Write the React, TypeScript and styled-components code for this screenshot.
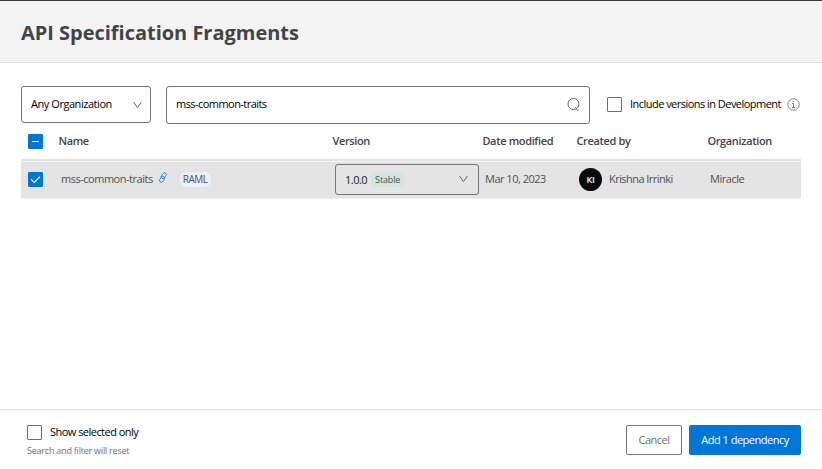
import React from "react";
import styled, { createGlobalStyle } from "styled-components";

const GlobalStyle = createGlobalStyle`
  *, *::before, *::after { box-sizing: border-box; }
  body { margin: 0; background: #fff; }
`;

const Dialog = styled.main`
  display: flex;
  flex-direction: column;
  width: 822px;
  height: 469px;
  overflow: hidden;
  background: #fff;
  color: #1a1a1a;
  font-family: "Open Sans", "Noto Sans", sans-serif;
  font-size: 11px;
`;

const Header = styled.header`
  display: flex;
  align-items: center;
  height: 63px;
  padding: 2px 21px 0;
  border-top: 1px solid #3d393b;
  border-bottom: 1px solid #e0e0e0;
  background: #f3f3f3;
`;

const Title = styled.h1`
  margin: 0;
  color: #444;
  font-size: 20px;
  font-weight: 700;
  line-height: 28px;
  letter-spacing: -0.02px;
  white-space: nowrap;
`;

const Text = styled.span<{ $spacing?: number; $color?: string; $size?: number; $weight?: number; $drop?: number }>`
  padding-top: ${(p) => Math.max(0, (p.$drop ?? 0) - 2)}px;
  padding-bottom: ${(p) => Math.max(0, 2 - (p.$drop ?? 0))}px;
  color: ${(p) => p.$color ?? "inherit"};
  font-size: ${(p) => p.$size ?? 11}px;
  font-weight: ${(p) => p.$weight ?? 400};
  letter-spacing: ${(p) => p.$spacing ?? -0.5}px;
  line-height: 16px;
  white-space: nowrap;
`;

const Body = styled.section`
  flex: 1;
  padding: 23px 21px 0;
`;

const Filters = styled.div`
  display: flex;
  align-items: flex-start;
  height: 38px;
`;

const Field = styled.div<{ $width: number; $height: number }>`
  display: flex;
  flex: none;
  align-items: center;
  justify-content: space-between;
  width: ${(p) => p.$width}px;
  height: ${(p) => p.$height}px;
  padding: 0 9px;
  border: 1px solid #747474;
  border-radius: 3px;
`;

const FilterSelect = styled(Field)`
  padding-right: 8px;
`;

const VersionSelect = styled(Field)`
  padding-right: 10px;
`;

const SearchField = styled(Field)`
  margin-left: 15px;
`;

const DevelopmentOption = styled.label`
  display: flex;
  align-items: center;
  gap: 8px;
  height: 37px;
  margin-left: 17px;
`;

const InfoSlot = styled.span`
  display: flex;
  margin-left: -1.5px;
`;

const Box = styled.span<{ $checked?: boolean }>`
  display: flex;
  align-items: center;
  justify-content: center;
  flex: none;
  width: 15px;
  height: 15px;
  border: 1px solid ${(p) => (p.$checked ? "#0176d9" : "#6d6d6d")};
  border-radius: 1px;
  background: ${(p) => (p.$checked ? "#0176d9" : "#fff")};
`;

const columns = "37px 274px 150px 94px 131px 1fr";

const TableHead = styled.div`
  display: grid;
  grid-template-columns: ${columns};
  align-items: center;
  height: 35px;
  color: #444;
`;

const HeadCheck = styled.div`
  padding-left: 7px;
`;

const Divider = styled.div`
  height: 3px;
  border-top: 2px solid #e3e3e3;
  background: #f6f6f6;
`;

const TableRow = styled.div`
  display: grid;
  grid-template-columns: ${columns};
  align-items: center;
  height: 37px;
  padding-bottom: 2px;
  border-bottom: 1px solid #efefef;
  background: #e4e4e4;
  color: #505050;
`;

const Cell = styled.div`
  display: flex;
  align-items: center;
  padding-left: 3px;
`;

const LinkSlot = styled.span`
  display: flex;
  margin: -3px 12px 0 5px;
`;

const Pill = styled.span<{ $green?: boolean }>`
  display: flex;
  align-items: center;
  justify-content: center;
  width: ${(p) => (p.$green ? 33 : 31)}px;
  height: 15px;
  border-radius: ${(p) => (p.$green ? 3 : 7)}px;
  background: ${(p) => (p.$green ? "#d0e7da" : "#e9f1fd")};
`;

const VersionValue = styled.span`
  display: flex;
  align-items: center;
  gap: 4px;
`;

const Avatar = styled.span`
  display: flex;
  align-items: center;
  justify-content: center;
  width: 23px;
  height: 23px;
  margin-right: 7px;
  padding-top: 1px;
  border-radius: 50%;
  background: #0b0b0b;
`;

const Footer = styled.footer`
  display: flex;
  align-items: flex-start;
  justify-content: space-between;
  height: 60px;
  padding: 15px 21px 0 27px;
  border-top: 1px solid #e1e1e1;
`;

const FooterOption = styled.div`
  display: flex;
  flex-direction: column;
  gap: 3px;
`;

const CheckLabel = styled.label`
  display: flex;
  align-items: center;
  gap: 8px;
  height: 15px;
`;

const Actions = styled.div`
  display: flex;
  gap: 7px;
`;

const Button = styled.button<{ $primary?: boolean }>`
  display: flex;
  align-items: center;
  justify-content: center;
  width: ${(p) => (p.$primary ? 112 : 56)}px;
  height: 30px;
  padding: 0;
  border: 1px solid ${(p) => (p.$primary ? "#0176d9" : "#757575")};
  border-radius: 2px;
  background: ${(p) => (p.$primary ? "#0176d9" : "#fff")};
  color: ${(p) => (p.$primary ? "#fff" : "#6e6e6e")};
  font-family: inherit;
`;

const Chevron = () => (
  <svg width="9" height="8" viewBox="0 0 9 8" fill="none" stroke="#686868">
    <path d="M.6 1 4.5 6.7 8.4 1" />
  </svg>
);

const SearchIcon = () => (
  <svg width="13" height="14" viewBox="0 0 13 14" fill="none" stroke="#686868">
    <circle cx="6.5" cy="6" r="5.5" />
    <path d="m8.3 9.2 2.4 3.3 1-.6" />
  </svg>
);

const InfoIcon = () => (
  <svg width="13" height="13" viewBox="0 0 13 13" fill="none" stroke="#777">
    <circle cx="6.5" cy="6.5" r="5.7" strokeWidth=".9" />
    <path d="M5.2 5.5h1.4v3.7M5 9.5h3.2M6 3.5h1.2" />
  </svg>
);

const LinkIcon = () => (
  <svg width="10" height="11" viewBox="0 0 10 11" fill="none" stroke="#2384d3" strokeWidth=".9">
    <rect x="3.9" y="0.5" width="3.6" height="6.4" rx="1.8" transform="rotate(38 5.7 3.7)" />
    <rect x="2.2" y="4.1" width="3.6" height="6.4" rx="1.8" transform="rotate(38 4 7.3)" />
  </svg>
);

const Dash = () => (
  <svg width="9" height="9" viewBox="0 0 9 9" stroke="#fff">
    <path d="M1 4.5h7" />
  </svg>
);

const Tick = () => (
  <svg width="11" height="9" viewBox="0 0 11 9" fill="none" stroke="#fff" strokeWidth="1.1">
    <path d="m1 4.2 3.2 3.2L10 1.6" />
  </svg>
);

const HeadText = styled(Text)`
  padding-left: 0.4px;
  font-weight: 600;
  letter-spacing: -0.35px;
`;

export default function App() {
  return (
    <Dialog>
      <GlobalStyle />
      <Header>
        <Title>API Specification Fragments</Title>
      </Header>
      <Body>
        <Filters>
          <FilterSelect $width={130} $height={37}>
            <Text $color="#000" $spacing={-0.45}>Any Organization</Text>
            <Chevron />
          </FilterSelect>
          <SearchField $width={424} $height={38}>
            <Text $color="#000" $spacing={-0.55}>mss-common-traits</Text>
            <SearchIcon />
          </SearchField>
          <DevelopmentOption>
            <Box />
            <Text $color="#000" $spacing={-0.53}>Include versions in Development</Text>
            <InfoSlot><InfoIcon /></InfoSlot>
          </DevelopmentOption>
        </Filters>
        <TableHead>
          <HeadCheck><Box $checked><Dash /></Box></HeadCheck>
          <HeadText>Name</HeadText>
          <HeadText>Version</HeadText>
          <HeadText>Date modified</HeadText>
          <HeadText>Created by</HeadText>
          <HeadText>Organization</HeadText>
        </TableHead>
        <Divider />
        <TableRow>
          <HeadCheck><Box $checked><Tick /></Box></HeadCheck>
          <Cell>
            <Text $drop={2} $spacing={-0.48}>mss-common-traits</Text>
            <LinkSlot><LinkIcon /></LinkSlot>
            <Pill><Text $drop={2} $size={10} $spacing={-0.5}>RAML</Text></Pill>
          </Cell>
          <Cell>
            <VersionSelect $width={144} $height={31}>
              <VersionValue>
                <Text $color="#222" $drop={4}>1.0.0</Text>
                <Pill $green><Text $drop={3} $size={9} $spacing={-0.15}>Stable</Text></Pill>
              </VersionValue>
              <Chevron />
            </VersionSelect>
          </Cell>
          <Cell><Text $drop={2}>Mar 10, 2023</Text></Cell>
          <Cell>
            <Avatar><Text $color="#fff" $size={9} $weight={600} $spacing={-0.2} $drop={2}>KI</Text></Avatar>
            <Text $drop={2} $spacing={-0.55}>Krishna Irrinki</Text>
          </Cell>
          <Cell><Text $drop={2} $spacing={-0.45}>Miracle</Text></Cell>
        </TableRow>
      </Body>
      <Footer>
        <FooterOption>
          <CheckLabel>
            <Box />
            <Text $color="#000" $spacing={-0.53}>Show selected only</Text>
          </CheckLabel>
          <Text $size={9} $color="#707070" $spacing={-0.22}>Search and filter will reset</Text>
        </FooterOption>
        <Actions>
          <Button><Text $drop={2}>Cancel</Text></Button>
          <Button $primary><Text $drop={2}>Add 1 dependency</Text></Button>
        </Actions>
      </Footer>
    </Dialog>
  );
}
